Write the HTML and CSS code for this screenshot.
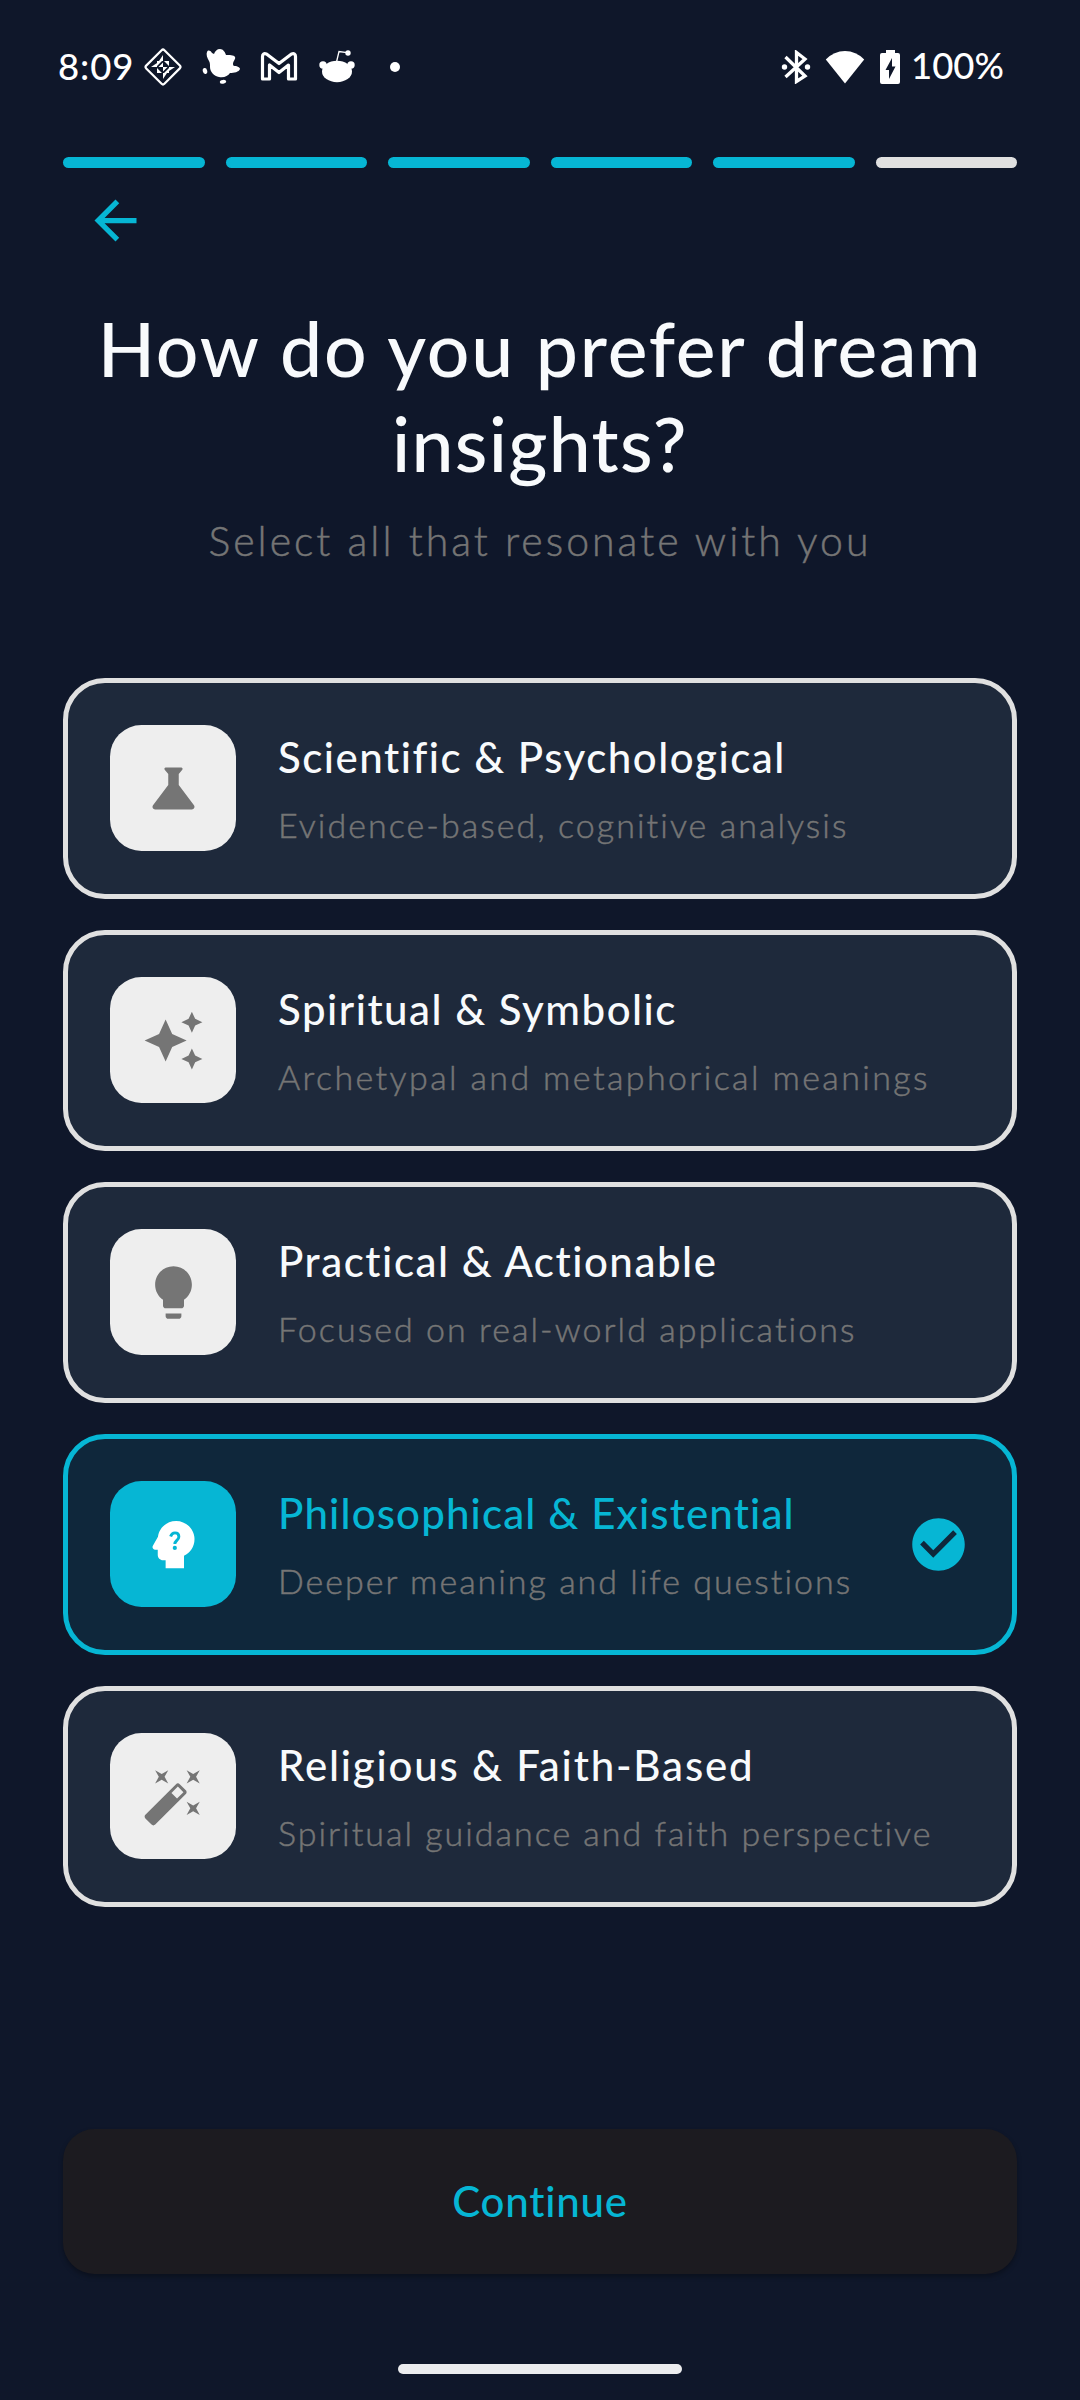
FILE: index.html
```html
<!DOCTYPE html>
<html lang="en">
<head>
<meta charset="utf-8">
<title>Dream insights</title>
<link rel="stylesheet" href="styles.css">
</head>
<body>
<main class="screen">
  <header class="status">
    <span class="clock">8:09</span>
    <div class="notifications">
      <svg class="glyph" viewBox="0 0 38 38"><path d="M17.6 2.200 2.200 17.600a2 2 0 0 0 0 2.800l15.400 15.400a2 2 0 0 0 2.800 0l15.400-15.400a2 2 0 0 0 0-2.800L20.400 2.200a2 2 0 0 0-2.800 0z" fill="none" stroke="#fff" stroke-width="2.200"/><path d="M19 7v6h-4zM31 19h-6v4zM19 31v-6h4zM7 19h6v-4zM13 13h5l-5 5zM25 13v5l-5-5zM25 25h-5l5-5zM13 25v-5l5 5zM19 14.500V19h4.500L19 23.500V19h-4.500z" fill="#fff"/></svg>
      <svg class="glyph" viewBox="0 0 38 38"><path d="M5 4c1-2 3-2 5 1l2 1c1-3 3-5 6-5 3 0 5 3 6 6 3 0 8 0 9 2 1 2-2 4-2 7 0 2 1 2 3 2 3 1 4 2 4 3-1 3-6 4-10 4-2 3-6 5-11 4-5-1-9-5-9-10 0-3 0-4-1-6C5 10 4 6 5 4z" fill="#fff"/><ellipse cx="3" cy="23" rx="2.2" ry="3" transform="rotate(-15 3 23)" fill="#fff"/><ellipse cx="21" cy="33.8" rx="3.2" ry="1.9" transform="rotate(-8 21 33.8)" fill="#fff"/></svg>
      <svg class="glyph" viewBox="0 0 38 38"><path d="M2.5 31V8.500Q2.500 4.800 6.500 6L19 15.500 31.500 6Q35.500 4.800 35.500 8.500V31H28.500V17L19 24.500 9.500 17V31z" fill="none" stroke="#fff" stroke-width="3.200" stroke-linejoin="round"/></svg>
      <svg class="glyph" viewBox="0 0 38 38"><ellipse cx="19" cy="23.500" rx="15" ry="10.700" fill="#fff"/><circle cx="5" cy="17" r="3.700" fill="#fff"/><circle cx="33" cy="17" r="3.700" fill="#fff"/><circle cx="30" cy="5" r="2.700" fill="#fff"/><path d="M18.500 14 21 3.500l8 1.200" fill="none" stroke="#fff" stroke-width="1.300"/></svg>
      <svg class="glyph" viewBox="0 0 38 38"><circle cx="19" cy="19" r="5" fill="#fff"/></svg>
    </div>
    <div class="system">
      <svg class="bluetooth" viewBox="0 0 30 34"><path d="M4.500 7 24 26l-8.500 5.500v-29L24 9 4.500 27" fill="none" stroke="#fff" stroke-width="3.300"/><circle cx="3.500" cy="17" r="2.700" fill="#fff"/><circle cx="26.500" cy="17" r="2.700" fill="#fff"/></svg>
      <svg class="wifi" viewBox="0 0 40 34"><path d="M20 33.500.8 9.500Q9 1 20 1T39.200 9.500z" fill="#fff"/></svg>
      <svg class="battery" viewBox="0 0 20 34"><path d="M6 0h9v3h3q2 0 2 2v27q0 2-2 2H2q-2 0-2-2V5q0-2 2-2h4zM12 8 5.500 20h3.500v9l6.500-12.500H12z" fill="#fff" fill-rule="evenodd"/></svg>
      <span class="charge">100%</span>
    </div>
  </header>

  <div class="steps">
    <i class="step done"></i><i class="step done"></i><i class="step done"></i><i class="step done"></i><i class="step done"></i><i class="step"></i>
  </div>

  <button class="back" aria-label="Back"><svg class="icon" viewBox="0 0 24 24"><path d="M20 11H7.830l5.590-5.590L12 4l-8 8 8 8 1.410-1.410L7.830 13H20v-2z"/></svg></button>

  <h1 class="title">How do you prefer dream<br><span class="title-end">insights?</span></h1>
  <p class="subtitle">Select all that resonate with you</p>

  <section class="options">
    <article class="card scientific">
      <div class="tile"><svg class="icon" viewBox="0 0 24 24"><path d="M19.800 18.400 14 10.670V6.500l1.350-1.690c.26-.33.030-.81-.39-.81H9.040c-.42 0-.65.480-.39.810L10 6.500v4.170L4.200 18.400c-.49.660-.020 1.600.8 1.600h14c.82 0 1.290-.94.8-1.600z"/></svg></div>
      <div class="copy"><h2 class="name">Scientific &amp; Psychological</h2><p class="hint">Evidence-based, cognitive analysis</p></div>
    </article>
    <article class="card spiritual">
      <div class="tile"><svg class="icon" viewBox="0 0 24 24"><path d="M19 9l1.250-2.750L23 5l-2.750-1.250L19 1l-1.250 2.750L15 5l2.750 1.250L19 9zm-7.500.5L9 4 6.500 9.500 1 12l5.500 2.500L9 20l2.500-5.500L17 12l-5.500-2.500zM19 15l-1.250 2.750L15 19l2.750 1.250L19 23l1.250-2.750L23 19l-2.750-1.250L19 15z"/></svg></div>
      <div class="copy"><h2 class="name">Spiritual &amp; Symbolic</h2><p class="hint">Archetypal and metaphorical meanings</p></div>
    </article>
    <article class="card practical">
      <div class="tile"><svg class="icon" viewBox="0 0 24 24"><path d="M9 21c0 .55.450 1 1 1h4c.55 0 1-.45 1-1v-1H9v1zm3-19C8.140 2 5 5.140 5 9c0 2.380 1.190 4.470 3 5.740V17c0 .55.450 1 1 1h6c.55 0 1-.45 1-1v-2.260c1.810-1.270 3-3.360 3-5.740 0-3.860-3.140-7-7-7z"/></svg></div>
      <div class="copy"><h2 class="name">Practical &amp; Actionable</h2><p class="hint">Focused on real-world applications</p></div>
    </article>
    <article class="card philosophical selected">
      <div class="tile"><svg class="icon" viewBox="0 0 24 24"><path d="M19.940 9.060C19.500 5.730 16.570 3 13 3 9.470 3 6.570 5.610 6.080 9l-1.930 3.480C3.740 13.140 4.220 14 5 14h1v2c0 1.100.9 2 2 2h1v3h7v-4.680c2.620-1.250 4.350-4.080 3.940-7.260z"/><path class="mark" d="M10.900 8.950C11.150 8.050 11.750 7.550 12.550 7.550 13.500 7.550 14.050 8.200 14.050 9 14.050 10.350 12.500 10.500 12.500 11.800"/><circle class="mark-dot" cx="12.500" cy="13.300" r=".8"/></svg></div>
      <div class="copy"><h2 class="name">Philosophical &amp; Existential</h2><p class="hint">Deeper meaning and life questions</p></div>
      <svg class="icon check" viewBox="0 0 24 24"><path d="M12 2C6.480 2 2 6.480 2 12s4.480 10 10 10 10-4.480 10-10S17.520 2 12 2zm-2 15-5-5 1.410-1.410L10 14.170l7.590-7.590L19 8l-9 9z"/></svg>
    </article>
    <article class="card religious">
      <div class="tile"><svg class="icon" viewBox="0 0 24 24"><path d="M7.500 5.600 10 7 8.600 4.500 10 2 7.500 3.400 5 2l1.400 2.500L5 7zm12 9.800L17 14l1.400 2.500L17 19l2.500-1.400L22 19l-1.400-2.500L22 14zM22 2l-2.500 1.400L17 2l1.400 2.500L17 7l2.500-1.400L22 7l-1.400-2.500zm-7.630 5.290c-.39-.39-1.020-.39-1.410 0L1.290 18.960c-.39.390-.39 1.020 0 1.410l2.340 2.340c.39.390 1.020.390 1.410 0L16.700 11.050c.39-.39.390-1.020 0-1.410l-2.330-2.350zm-1.030 5.490-2.120-2.120 2.440-2.440 2.120 2.120-2.440 2.440z"/></svg></div>
      <div class="copy"><h2 class="name">Religious &amp; Faith-Based</h2><p class="hint">Spiritual guidance and faith perspective</p></div>
    </article>
  </section>

  <button class="continue">Continue</button>
  <div class="home"></div>
</main>
</body>
</html>
```
FILE: styles.css
```css
* { box-sizing: border-box; margin: 0; padding: 0; }
body { background: #0f172a; font-family: Lato, "Open Sans", sans-serif; color: #f8fafc; font-variant-ligatures: none; }
.screen { width: 1080px; height: 2400px; display: flex; flex-direction: column; background: #0f172a; padding: 0 63px; }
.status { height: 133px; display: flex; align-items: center; margin: 0 -5px; color: #fff; font-size: 36.5px; font-weight: 500; }
.clock { width: 86px; letter-spacing: 0.9px; padding-bottom: 2px; }
.notifications { display: flex; gap: 20px; flex: 1; }
.glyph { width: 38px; height: 38px; display: block; }
.system { display: flex; align-items: center; }
.bluetooth { width: 30px; height: 34px; margin-right: 14px; }
.wifi { width: 40px; height: 34px; margin-right: 15px; }
.battery { width: 20px; height: 34px; margin-right: 11px; }
.charge { width: 111px; padding-bottom: 3px; }
.steps { display: flex; gap: 21px; margin-top: 24px; }
.step { flex: 1; height: 11px; border-radius: 6px; background: #e0e0e0; }
.step.done { background: #06b6d4; }
.icon { width: 63px; height: 63px; display: block; fill: currentColor; }
.back { align-self: flex-start; margin: 21px 0 0 21px; border: 0; background: none; color: #06b6d4; }
.title { margin-top: 49px; text-align: center; font-size: 75px; line-height: 95px; font-weight: 500; white-space: nowrap; letter-spacing: 1.8px; }
.title-end { letter-spacing: 1.3px; }
.subtitle { margin-top: 24px; text-align: center; font-size: 41px; line-height: 52px; font-weight: 300; letter-spacing: 3px; color: #757575; -webkit-text-stroke: 0.5px #757575; }
.options { margin-top: 111px; display: flex; flex-direction: column; gap: 31.5px; }
.card { height: 220.5px; display: flex; align-items: center; padding: 0 42px; border: 5px solid #e0e0e0; border-radius: 42px; background: #1e293b; }
.tile { width: 126px; height: 126px; border-radius: 31.5px; display: grid; place-items: center; background: #eee; color: #757575; }
.copy { flex: 1; margin-left: 42px; white-space: nowrap; }
.name { font-size: 42px; line-height: 58px; font-weight: 500; letter-spacing: 1.5px; }
.hint { margin-top: 15px; font-size: 34px; line-height: 48px; font-weight: 300; letter-spacing: 2.05px; color: #757575; -webkit-text-stroke: 0.5px #757575; }
.spiritual .hint { letter-spacing: 2.38px; }
.practical .name { letter-spacing: 1.55px; }
.philosophical .name { letter-spacing: 1.15px; }
.philosophical .hint, .religious .hint { letter-spacing: 2px; }
.religious .name { letter-spacing: 1.8px; }
.selected { border-color: #06b6d4; background: #0f273b; }
.selected .tile { background: #06b6d4; color: #fff; }
.selected .name, .check { color: #06b6d4; }
.mark { fill: none; stroke: #06b6d4; stroke-width: 1.1; }
.mark-dot { fill: #06b6d4; }
.continue { margin-top: 222.5px; height: 145px; padding-bottom: 2px; border: 0; border-radius: 31.5px; background: #1c1b20; box-shadow: 0 3px 5px rgba(0,0,0,.3); color: #06b6d4; font: 500 42px/54px Lato, sans-serif; letter-spacing: 0.8px; }
.home { width: 284px; height: 10px; margin: 90px auto 0; border-radius: 5px; background: #ebecee; }
```
